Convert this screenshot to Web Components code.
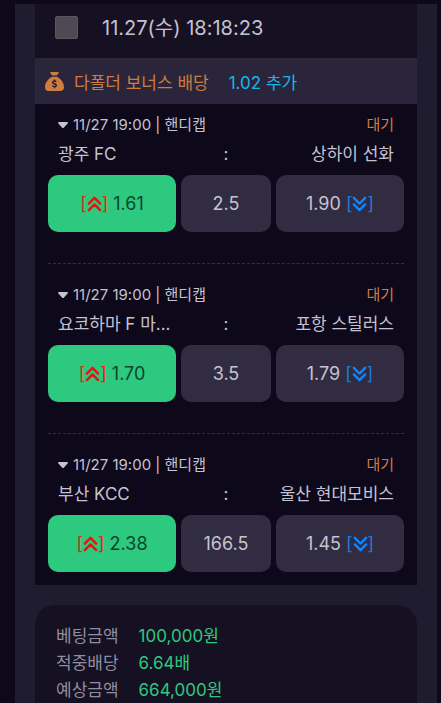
<!DOCTYPE html>
<html lang="ko">
<head>
<meta charset="utf-8">
<meta name="viewport" content="width=device-width, initial-scale=1">
<title>베팅 내역</title>
<style>
:root {
  --page: #0e081b;
  --panel: #201c2f;
  --card: #161023;
  --strip: #2b253b;
  --cell: #322c42;
  --green: #2cc97e;
  --orange: #cf7c40;
  --text: #c5c3cf;
}
body {
  margin: 0;
  background: var(--page);
  color: var(--text);
  font-family: Inter, "Noto Sans CJK KR", sans-serif;
  font-size: 17px;
}
</style>
</head>
<body>
<bet-slip>
  <slip-header slot="head">11.27(수) 18:18:23</slip-header>
  <bonus-strip slot="head">다폴더 보너스 배당<span slot="value">1.02 추가</span></bonus-strip>
  <bet-match when="11/27 19:00" market="핸디캡" status="대기" home="광주 FC" away="상하이 선화" up="1.61" line="2.5" down="1.90"></bet-match>
  <bet-match when="11/27 19:00" market="핸디캡" status="대기" home="요코하마 F 마..." away="포항 스틸러스" up="1.70" line="3.5" down="1.79"></bet-match>
  <bet-match when="11/27 19:00" market="핸디캡" status="대기" home="부산 KCC" away="울산 현대모비스" up="2.38" line="166.5" down="1.45"></bet-match>
  <bet-summary slot="foot">
    <summary-row label="베팅금액">100,000원</summary-row>
    <summary-row label="적중배당">6.64배</summary-row>
    <summary-row label="예상금액">664,000원</summary-row>
  </bet-summary>
</bet-slip>

<script>
class BaseElement extends HTMLElement {
  constructor() {
    super();
    this.attachShadow({ mode: "open" });
  }
  connectedCallback() {
    this.shadowRoot.innerHTML = this.render();
  }
  get(name) {
    return this.getAttribute(name) || "";
  }
}

customElements.define("bet-slip", class extends BaseElement {
  render() {
    return `<style>
      :host { display: flex; flex-direction: column; box-sizing: border-box; min-height: 100vh; padding: 4px 4px 0 15px; }
      main { flex: 1; display: flex; flex-direction: column; gap: 20px; padding: 0 20px; background: var(--panel); }
      .list { padding: 10px 13px 13px; background: var(--page); }
      slot[name=foot] { display: contents; }
    </style>
    <main>
      <section><slot name="head"></slot><div class="list"><slot></slot></div></section>
      <slot name="foot"></slot>
    </main>`;
  }
});

customElements.define("slip-header", class extends BaseElement {
  render() {
    return `<style>
      :host { display: block; background: var(--card); }
      label { display: flex; align-items: center; gap: 24px; height: 54px; padding: 0 20px 7px; box-sizing: border-box; font-size: 20px; line-height: 28px; }
      input { appearance: none; width: 23px; height: 23px; margin: 0; border: 1px solid #5a565c; border-radius: 2px; background: #4e4a53; }
    </style>
    <label><input type="checkbox"><span><slot></slot></span></label>`;
  }
});

customElements.define("bonus-strip", class extends BaseElement {
  render() {
    return `<style>
      :host { display: flex; align-items: center; height: 46px; padding: 0 10px; background: var(--strip); color: var(--orange); }
      svg { width: 19px; height: 19px; margin-right: 10px; }
      .value { margin-left: 20px; color: #14b6ea; }
    </style>
    <svg viewBox="0 0 512 512" aria-hidden="true"><path fill="currentColor" d="M320 96H192L144.600 24.900C137.500 14.200 145.100 0 157.900 0H354.100c12.800 0 20.400 14.200 13.300 24.900L320 96zM192 128H320c3.800 2.500 8.100 5.300 13 8.400C389.700 172.700 512 250.900 512 416c0 53-43 96-96 96H96c-53 0-96-43-96-96C0 250.900 122.300 172.700 179 136.400c4.800-3.100 9.200-5.900 13-8.400zm84 88c0-11-9-20-20-20s-20 9-20 20v14c-7.600 1.700-15.200 4.400-22.200 8.500-13.900 8.300-25.900 22.800-25.800 43.900.1 20.300 12 33.100 24.700 40.700 11 6.600 24.700 10.800 35.600 14l1.700.5c12.600 3.800 21.800 6.800 28 10.700 5.100 3.200 5.800 5.400 5.900 8.200.1 5-1.800 8-5.900 10.500-5 3.100-12.900 5-21.400 4.700-11.100-.4-21.500-3.900-35.100-8.500-2.300-.8-4.700-1.600-7.200-2.400-10.500-3.500-21.800 2.200-25.300 12.600s2.200 21.800 12.600 25.300c1.900.6 4 1.300 6.100 2.100 8.300 2.900 17.900 6.200 28.200 8.400V424c0 11 9 20 20 20s20-9 20-20v-13.800c8-1.700 16-4.500 23.200-9 14.300-8.900 25.100-24.100 24.800-45-.3-20.300-11.700-33.400-24.600-41.600-11.500-7.200-25.900-11.600-37.100-15l-.7-.2c-12.800-3.900-21.900-6.700-28.300-10.500-5.200-3.100-5.300-4.900-5.300-6.700 0-3.700 1.400-6.500 6.200-9.300 5.400-3.200 13.600-5.100 21.500-5 9.600.1 20.200 2.200 31.200 5.200 10.700 2.800 21.600-3.500 24.500-14.200s-3.500-21.600-14.200-24.500c-6.500-1.700-13.700-3.400-21.100-4.700V216z"/></svg>
    <span><slot></slot></span><span class="value"><slot name="value"></slot></span>`;
  }
});

customElements.define("odd-shift", class extends BaseElement {
  render() {
    const d = this.get("dir") === "up" ? "M2 7.500l6-6 6 6M2 14.500l6-6 6 6" : "M2 1.500l6 6 6-6M2 8.500l6 6 6-6";
    return `<style>
      :host { display: inline-flex; align-items: center; }
      svg { width: 15px; height: 16px; }
      :host([dir=up]) { color: #e02a12; }
      :host([dir=up]) svg { color: #f40d0d; }
      :host([dir=down]) { color: #187bd6; }
      :host([dir=down]) svg { color: #0d86ff; }
    </style>
    <span>[</span><svg viewBox="0 0 16 16" aria-hidden="true"><path d="${d}" fill="none" stroke="currentColor" stroke-width="2.600" stroke-linecap="round" stroke-linejoin="round"/></svg><span>]</span>`;
  }
});

customElements.define("bet-match", class extends BaseElement {
  render() {
    return `<style>
      :host { display: block; }
      :host(:not(:last-of-type)) { padding-bottom: 31px; margin-bottom: 20px; border-bottom: 1px dashed #332e40; }
      .meta { display: flex; justify-content: space-between; padding: 0 10px; font-size: 15px; line-height: 22px; }
      .when { display: flex; align-items: center; gap: 5px; }
      .when svg { width: 10px; height: 6px; }
      .status { color: var(--orange); }
      .teams { display: grid; grid-template-columns: minmax(0, 1fr) 70px minmax(0, 1fr); padding: 0 10px; margin: 3px 0 6px; line-height: 30px; }
      .teams span { white-space: nowrap; }
      .teams span:nth-child(2) { text-align: center; }
      .teams span:nth-child(3) { text-align: right; }
      .odds { display: grid; grid-template-columns: minmax(0, 1fr) 90px minmax(0, 1fr); gap: 5px; }
      button { display: flex; align-items: center; justify-content: center; gap: 5px; height: 57px; padding: 0; border: 0; border-radius: 10px; background: var(--cell); color: inherit; font: inherit; font-size: 18px; }
      .picked { background: var(--green); color: #0e4430; }
    </style>
    <div class="meta">
      <span class="when"><svg viewBox="0 0 10 6" aria-hidden="true"><path d="M1 0h8q1.500.2.600 1.500L6 5.400q-1 1-2 0L.4 1.500Q-.5.2 1 0z" fill="currentColor"/></svg><span>${this.get("when")} | ${this.get("market")}</span></span>
      <span class="status">${this.get("status")}</span>
    </div>
    <div class="teams"><span>${this.get("home")}</span><span>:</span><span>${this.get("away")}</span></div>
    <div class="odds">
      <button type="button" class="picked" aria-pressed="true"><odd-shift dir="up"></odd-shift><span>${this.get("up")}</span></button>
      <button type="button">${this.get("line")}</button>
      <button type="button"><span>${this.get("down")}</span><odd-shift dir="down"></odd-shift></button>
    </div>`;
  }
});

customElements.define("bet-summary", class extends BaseElement {
  render() {
    return `<style>
      :host { flex: 1; display: flex; flex-direction: column; gap: 2px; padding: 19px 21px 0; border-radius: 20px 20px 0 0; background: var(--card); }
    </style><slot></slot>`;
  }
});

customElements.define("summary-row", class extends BaseElement {
  render() {
    return `<style>
      :host { display: flex; gap: 20px; line-height: 25px; }
      .label { color: #8f8d9e; }
      .value { color: var(--green); }
    </style><span class="label">${this.get("label")}</span><span class="value"><slot></slot></span>`;
  }
});
</script>
</body>
</html>
